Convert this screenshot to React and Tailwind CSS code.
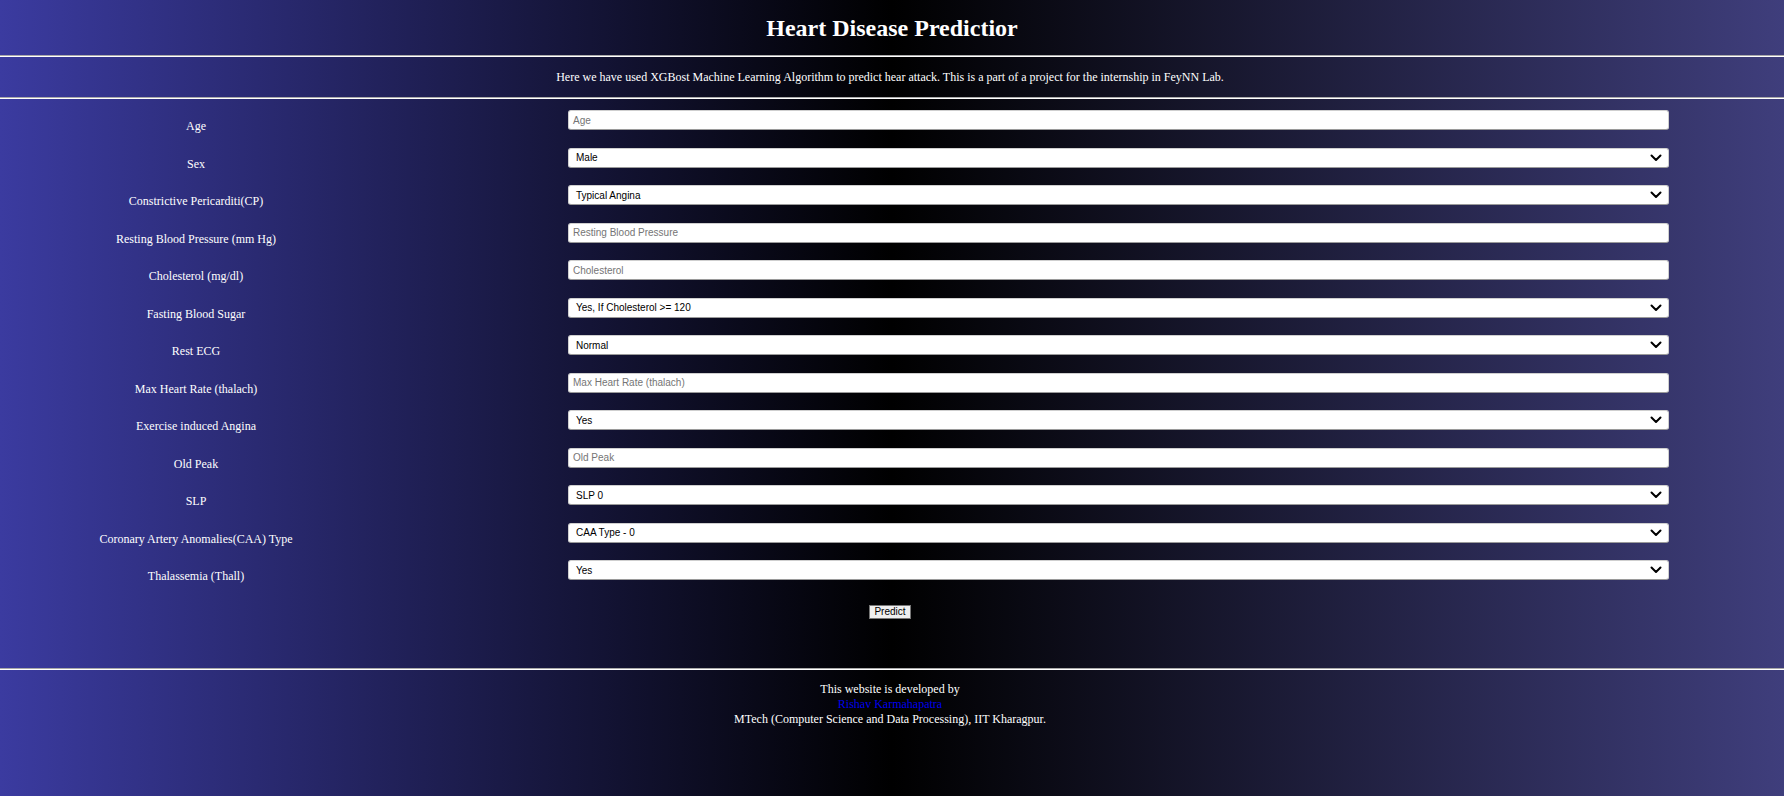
const fields = [
  { label: "Age", type: "input", placeholder: "Age" },
  { label: "Sex", type: "select", value: "Male" },
  { label: "Constrictive Pericarditi(CP)", type: "select", value: "Typical Angina" },
  { label: "Resting Blood Pressure (mm Hg)", type: "input", placeholder: "Resting Blood Pressure" },
  { label: "Cholesterol (mg/dl)", type: "input", placeholder: "Cholesterol" },
  { label: "Fasting Blood Sugar", type: "select", value: "Yes, If Cholesterol >= 120" },
  { label: "Rest ECG", type: "select", value: "Normal" },
  { label: "Max Heart Rate (thalach)", type: "input", placeholder: "Max Heart Rate (thalach)" },
  { label: "Exercise induced Angina", type: "select", value: "Yes" },
  { label: "Old Peak", type: "input", placeholder: "Old Peak" },
  { label: "SLP", type: "select", value: "SLP 0" },
  { label: "Coronary Artery Anomalies(CAA) Type", type: "select", value: "CAA Type - 0" },
  { label: "Thalassemia (Thall)", type: "select", value: "Yes" },
];

function Rule() {
  return <div className="h-[2px] border-t border-[#a9a9a9] border-b border-b-white" />;
}

function Field({ f }) {
  const box =
    "h-[20px] w-[1101px] ml-[176px] bg-white rounded-[3px] border border-[#cfcfcf] border-b-[#9a9a9a] flex items-center text-[10px] font-['Liberation_Sans',Arial,sans-serif]";
  return (
    <div className="flex h-[37.5px]">
      <div className="w-[392px] text-center text-[12px] leading-[14px] pt-[9px] text-white">{f.label}</div>
      {f.type === "input" ? (
        <div className={box + " pl-[4px] text-[#757575]"}>{f.placeholder}</div>
      ) : (
        <div className={box + " pl-[7px] pr-[6px] justify-between text-black"}>
          <span>{f.value}</span>
          <svg width="12" height="8" viewBox="0 0 12 8" fill="none">
            <path d="M1.5 1.5 L6 6 L10.5 1.5" stroke="#000" strokeWidth="2" strokeLinecap="round" strokeLinejoin="round" />
          </svg>
        </div>
      )}
    </div>
  );
}

export default function App() {
  return (
    <div className="min-h-[796px] w-full bg-[linear-gradient(to_right,#3b3ba0_0%,#000_50%,#3f3e7c_100%)] text-white font-['Liberation_Serif','Times_New_Roman',serif]">
      <div className="h-[55px] flex items-center justify-center">
        <h1 className="text-[24px] leading-[28px] font-bold">Heart Disease Predictior</h1>
      </div>
      <Rule />
      <div className="h-[40px] flex items-center justify-center text-[12px] pr-[4px]">
        Here we have used XGBost Machine Learning Algorithm to predict hear attack. This is a part of a project for the internship in FeyNN Lab.
      </div>
      <Rule />
      <div className="pt-[11px]">
        {fields.map((f) => (
          <Field key={f.label} f={f} />
        ))}
      </div>
      <div className="flex justify-center pt-[7.5px] pr-[4px]">
        <button className="h-[14px] w-[42px] bg-[#efefef] border border-[#767676] text-black text-[10px] leading-[12px] font-['Liberation_Sans',Arial,sans-serif]">
          Predict
        </button>
      </div>
      <div className="h-[49px]" />
      <Rule />
      <div className="pt-[12px] pr-[4px] text-center text-[12px] leading-[15px]">
        <div>This website is developed by</div>
        <div className="text-[#0000ee]">Rishav Karmahapatra</div>
        <div>MTech (Computer Science and Data Processing), IIT Kharagpur.</div>
      </div>
    </div>
  );
}
